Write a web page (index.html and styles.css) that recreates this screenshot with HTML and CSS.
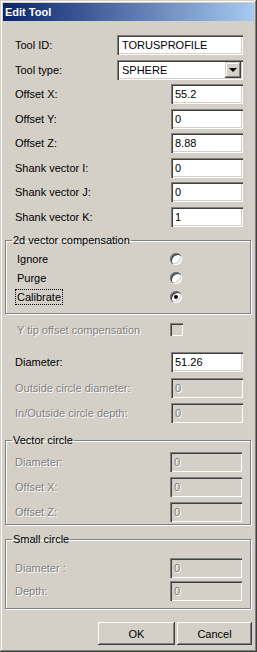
FILE: index.html
```html
<!DOCTYPE html>
<html lang="en">

<head>
    <meta charset="UTF-8">
    <meta name="viewport" content="width=device-width, initial-scale=1.0">
    <title>Edit Tool</title>
    <link rel="stylesheet" href="styles.css">
</head>

<body>
    <div class="window">
        <div class="titlebar">Edit Tool</div>

        <div class="body">
            <div class="fields">
                <div class="row">
                    <label>Tool ID:</label>
                    <input class="field wide" type="text" value="TORUSPROFILE">
                </div>
                <div class="row">
                    <label>Tool type:</label>
                    <div class="field wide combo">
                        <span>SPHERE</span>
                        <span class="drop"><span class="arrow"></span></span>
                    </div>
                </div>
                <div class="row">
                    <label>Offset X:</label>
                    <input class="field" type="text" value="55.2">
                </div>
                <div class="row">
                    <label>Offset Y:</label>
                    <input class="field" type="text" value="0">
                </div>
                <div class="row">
                    <label>Offset Z:</label>
                    <input class="field" type="text" value="8.88">
                </div>
                <div class="row">
                    <label>Shank vector I:</label>
                    <input class="field" type="text" value="0">
                </div>
                <div class="row">
                    <label>Shank vector J:</label>
                    <input class="field" type="text" value="0">
                </div>
                <div class="row">
                    <label>Shank vector K:</label>
                    <input class="field" type="text" value="1">
                </div>
            </div>

            <fieldset class="group group-2d">
                <legend>2d vector compensation</legend>
                <div class="opt">
                    <label>Ignore</label>
                    <span class="radio"></span>
                </div>
                <div class="opt">
                    <label>Purge</label>
                    <span class="radio"></span>
                </div>
                <div class="opt">
                    <label><span class="focus">Calibrate</span></label>
                    <span class="radio checked"></span>
                </div>
            </fieldset>

            <div class="check-row">
                <label class="off">Y tip offset compensation</label>
                <span class="checkbox"></span>
            </div>

            <div class="fields diam">
                <div class="row">
                    <label>Diameter:</label>
                    <input class="field" type="text" value="51.26">
                </div>
                <div class="row loose">
                    <label class="off">Outside circle diameter:</label>
                    <input class="field" type="text" value="0" disabled>
                </div>
                <div class="row loose">
                    <label class="off">In/Outside circle depth:</label>
                    <input class="field" type="text" value="0" disabled>
                </div>
            </div>

            <fieldset class="group group-vector">
                <legend>Vector circle</legend>
                <div class="row">
                    <label class="off">Diameter:</label>
                    <input class="field" type="text" value="0" disabled>
                </div>
                <div class="row">
                    <label class="off">Offset X:</label>
                    <input class="field" type="text" value="0" disabled>
                </div>
                <div class="row">
                    <label class="off">Offset Z:</label>
                    <input class="field" type="text" value="0" disabled>
                </div>
            </fieldset>

            <fieldset class="group group-small">
                <legend>Small circle</legend>
                <div class="row">
                    <label class="off">Diameter :</label>
                    <input class="field" type="text" value="0" disabled>
                </div>
                <div class="row tight">
                    <label class="off">Depth:</label>
                    <input class="field" type="text" value="0" disabled>
                </div>
            </fieldset>

            <div class="buttons">
                <button class="btn ok">OK</button>
                <button class="btn cancel">Cancel</button>
            </div>
        </div>
    </div>
</body>

</html>
```

FILE: styles.css
```css
* {
    margin: 0;
    padding: 0;
    box-sizing: border-box;
}

body {
    background-color: #d4d0c8;
    font-family: "Liberation Sans", Arial, sans-serif;
    font-size: 11px;
    color: #000;
}

.window {
    width: 257px;
    height: 652px;
    padding: 3px;
    background-color: #d4d0c8;
    box-shadow: inset -1px -1px #404040, inset 1px 1px #d4d0c8,
        inset -2px -2px #808080, inset 2px 2px #fff;
}

.titlebar {
    height: 18px;
    line-height: 18px;
    padding-left: 2px;
    color: #fff;
    font-weight: bold;
    font-size: 11px;
    background: linear-gradient(to right, #0a246a, #a6caf0);
}

.body {
    padding: 14px 2px 0;
}

/* label + edit rows */
.row {
    display: flex;
    align-items: center;
    justify-content: space-between;
    height: 20px;
    padding: 0 9px 0 10px;
}

.fields .row + .row {
    margin-top: 4.5px;
}

.field {
    width: 72px;
    height: 20px;
    border: none;
    outline: none;
    padding: 0 3px 0 4px;
    font-family: inherit;
    font-size: 11px;
    color: #000;
    background-color: #fff;
    box-shadow: inset 1px 1px #808080, inset 2px 2px #404040,
        inset -1px -1px #fff, inset -2px -2px #d4d0c8;
}

.field.wide {
    width: 126px;
    padding-left: 5px;
}

.field:disabled {
    background-color: #d4d0c8;
    color: #808080;
    text-shadow: 1px 1px #fff;
}

.combo {
    display: flex;
    align-items: center;
    justify-content: space-between;
    padding: 2px 2px 2px 3px;
}

.drop {
    width: 16px;
    height: 16px;
    display: flex;
    align-items: center;
    justify-content: center;
    background-color: #d4d0c8;
    box-shadow: inset -1px -1px #404040, inset 1px 1px #d4d0c8,
        inset -2px -2px #808080, inset 2px 2px #fff;
}

.arrow {
    width: 0;
    height: 0;
    border-left: 4px solid transparent;
    border-right: 4px solid transparent;
    border-top: 4px solid #000;
}

.off {
    color: #808080;
    text-shadow: 1px 1px #fff;
}

/* group boxes */
.group {
    border: 1px solid #808080;
    box-shadow: inset 1px 1px #fff, 1px 1px #fff;
    margin-right: 1px;
}

.group legend {
    margin-left: 6px;
    padding: 0 1px;
    line-height: 13px;
}

.group-2d {
    margin-top: 7.5px;
    padding: 2px 0 7px;
}

.opt {
    display: flex;
    align-items: center;
    height: 19px;
    padding-left: 11px;
}

.opt label {
    width: 153px;
}

.focus {
    outline: 1px dotted #000;
    outline-offset: 1px;
}

.radio {
    width: 12px;
    height: 12px;
    border-radius: 50%;
    background-color: #fff;
    position: relative;
    box-shadow: inset 1px 1px #808080, inset 2px 2px #404040,
        inset -1px -1px #fff, inset -2px -2px #d4d0c8;
}

.radio.checked::after {
    content: "";
    position: absolute;
    left: 4px;
    top: 4px;
    width: 4px;
    height: 4px;
    border-radius: 50%;
    background-color: #000;
}

.check-row {
    display: flex;
    align-items: center;
    height: 13px;
    margin-top: 9px;
    padding-left: 12px;
}

.check-row label {
    width: 153px;
}

.checkbox {
    width: 13px;
    height: 13px;
    background-color: #d4d0c8;
    box-shadow: inset 1px 1px #808080, inset 2px 2px #404040,
        inset -1px -1px #fff, inset -2px -2px #d4d0c8;
}

.diam {
    margin-top: 16px;
}

.fields .row.loose {
    margin-top: 5.5px;
}

.group .row {
    padding: 0 8px 0 9px;
}

.group .row + .row {
    margin-top: 5px;
}

.group-vector {
    margin-top: 11px;
    padding: 5px 0 2px;
}

.group-small {
    margin-top: 8px;
    padding: 12px 0 7px;
}

.group .row.tight {
    margin-top: 3px;
}

/* dialog buttons */
.buttons {
    display: flex;
    justify-content: flex-end;
    gap: 2px;
    margin-top: 13px;
}

.btn {
    height: 23px;
    border: none;
    font-family: inherit;
    font-size: 11px;
    color: #000;
    background-color: #d4d0c8;
    box-shadow: inset -1px -1px #404040, inset 1px 1px #fff,
        inset -2px -2px #808080;
}

.ok {
    width: 77px;
}

.cancel {
    width: 75px;
}
```
